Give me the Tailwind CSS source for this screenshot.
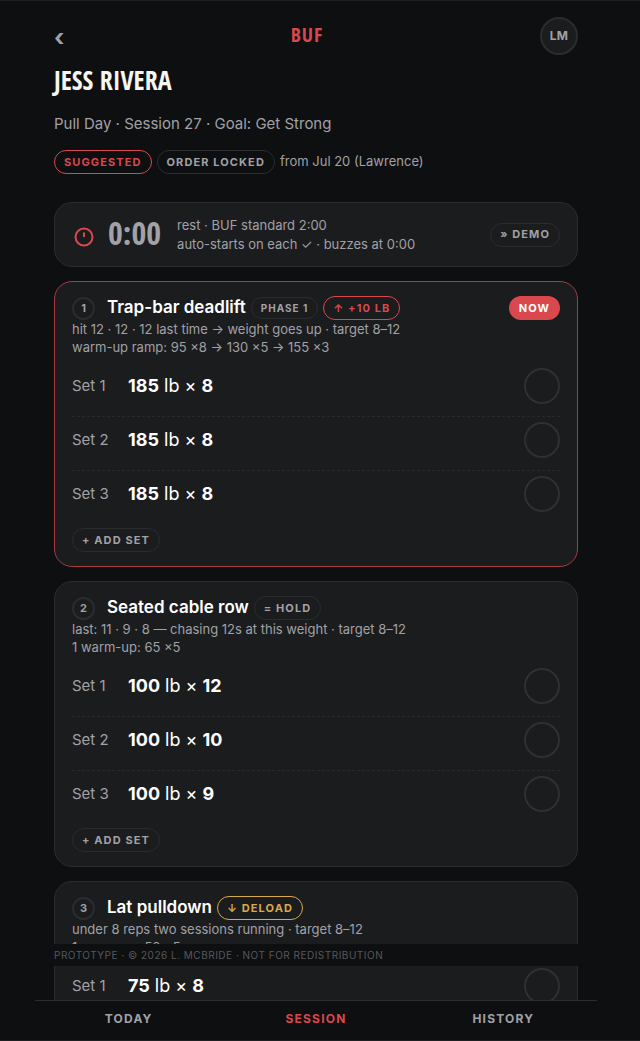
<!DOCTYPE html>
<html lang="en">
  <head>
    <meta charset="UTF-8" />
    <meta name="viewport" content="width=device-width, initial-scale=1.0" />
    <title>BUF - Session</title>
    <script src="https://cdn.jsdelivr.net/npm/@tailwindcss/browser@4"></script>
  </head>
  <body class="h-screen overflow-hidden flex flex-col border-y border-[#1e1f21] bg-[#0e0f11] pr-2 font-['Inter',sans-serif] text-[#a1a1a6]">
    <div class="relative flex-1 min-h-0 w-full max-w-[562px] mx-auto overflow-hidden">
      <main class="px-[19px] pt-4">
        <!-- Header -->
        <header class="flex items-center justify-between">
          <a href="#" aria-label="Back" class="w-5 pt-1 text-2xl font-bold">‹</a>
          <div class="pb-0.5 font-['Open_Sans_Condensed','Noto_Sans_Condensed','DejaVu_Sans_Condensed',sans-serif] text-xl font-extrabold tracking-wider text-[#d9484c]">BUF</div>
          <button type="button" class="size-[38px] rounded-full border-2 border-[#2b2c2f] bg-[#1b1c1e] text-xs font-bold tracking-wide">LM</button>
        </header>
        <h1 class="mt-[9px] font-['Open_Sans_Condensed','Noto_Sans_Condensed','DejaVu_Sans_Condensed',sans-serif] text-[26px] leading-8 font-extrabold text-[#f7f5f0]">JESS RIVERA</h1>
        <p class="mt-4 text-[15px] leading-6">Pull Day · Session 27 · Goal: Get Strong</p>
        <div class="mt-3.5 flex items-center gap-[5px] text-[13px]">
          <span class="h-6 flex items-center rounded-full border border-[#d9484c] px-[9px] text-[11px] font-bold tracking-widest text-[#d9484c]">SUGGESTED</span>
          <span class="h-6 flex items-center rounded-full border border-[#2b2c2f] px-[9px] text-[11px] font-bold tracking-widest">ORDER LOCKED</span>
          <span>from Jul 20 (Lawrence)</span>
        </div>

        <!-- Rest timer -->
        <section class="mt-7 min-h-[65px] flex items-center rounded-[18px] border border-[#2b2c2f] bg-[#1b1c1e] px-[17px] py-3">
          <svg class="mt-1 size-6" viewBox="0 0 24 24" fill="none" stroke="#d9484c" stroke-width="2"><circle cx="12" cy="12" r="8.5" /><path d="M12 7.5v4.5" /></svg>
          <div class="ml-3 pb-1 font-['Open_Sans_Condensed','Noto_Sans_Condensed','DejaVu_Sans_Condensed',sans-serif] text-[32px] leading-8 font-extrabold">0:00</div>
          <p class="ml-4 text-[13px] leading-[19px]">rest · BUF standard 2:00<br />auto-starts on each ✓ · buzzes at 0:00</p>
          <button type="button" class="ml-auto h-6 rounded-full border border-[#2b2c2f] px-[9px] text-[11px] font-bold tracking-widest">» DEMO</button>
        </section>

        <!-- Exercise 1 -->
        <section class="mt-3.5 rounded-[18px] border border-[#a83c40] bg-[#1b1c1e] px-[17px] py-3.5">
          <div class="flex items-center h-6">
            <span class="size-[23px] flex items-center justify-center rounded-full border-2 border-[#2b2c2f] text-[11px] font-bold">1</span>
            <h2 class="ml-3 text-[17px] font-semibold text-white">Trap-bar deadlift</h2>
            <span class="ml-[5px] h-[22px] flex items-center rounded-full border border-[#2b2c2f] px-[9px] text-[10px] font-bold tracking-widest">PHASE 1</span>
            <span class="ml-[5px] h-6 flex items-center rounded-full border border-[#d9484c] px-[9px] text-[11px] font-bold tracking-widest text-[#d9484c]">↑ +10 LB</span>
            <span class="ml-auto h-6 flex items-center rounded-full bg-[#d9484c] px-2.5 text-[11px] font-bold tracking-widest text-white">NOW</span>
          </div>
          <p class="text-[13px] leading-[18px]">hit 12 · 12 · 12 last time → weight goes up · target 8–12<br />warm-up ramp: 95 ×8 → 130 ×5 → 155 ×3</p>
          <ul class="mt-[7px] divide-y divide-dashed divide-[#28292b]">
            <li class="flex items-center pt-[5px] pb-3"><span class="w-14 text-[15px]">Set 1</span><span class="text-lg text-white"><b>185</b> lb × <b>8</b></span><button type="button" aria-label="Complete set 1" class="ml-auto size-9 rounded-full border-2 border-[#2f3033]"></button></li>
            <li class="flex items-center pt-[5px] pb-3"><span class="w-14 text-[15px]">Set 2</span><span class="text-lg text-white"><b>185</b> lb × <b>8</b></span><button type="button" aria-label="Complete set 2" class="ml-auto size-9 rounded-full border-2 border-[#2f3033]"></button></li>
            <li class="flex items-center pt-[5px] pb-3"><span class="w-14 text-[15px]">Set 3</span><span class="text-lg text-white"><b>185</b> lb × <b>8</b></span><button type="button" aria-label="Complete set 3" class="ml-auto size-9 rounded-full border-2 border-[#2f3033]"></button></li>
          </ul>
          <button type="button" class="mt-1 block h-6 rounded-full border border-[#2b2c2f] px-[9px] text-[11px] font-bold tracking-widest">+ ADD SET</button>
        </section>

        <!-- Exercise 2 -->
        <section class="mt-3.5 rounded-[18px] border border-[#2b2c2f] bg-[#1b1c1e] px-[17px] py-3.5">
          <div class="flex items-center h-6">
            <span class="size-[23px] flex items-center justify-center rounded-full border-2 border-[#2b2c2f] text-[11px] font-bold">2</span>
            <h2 class="ml-3 text-[17px] font-semibold text-white">Seated cable row</h2>
            <span class="ml-[5px] h-6 flex items-center rounded-full border border-[#2b2c2f] px-[9px] text-[11px] font-bold tracking-widest">= HOLD</span>
          </div>
          <p class="text-[13px] leading-[18px]">last: 11 · 9 · 8 — chasing 12s at this weight · target 8–12<br />1 warm-up: 65 ×5</p>
          <ul class="mt-[7px] divide-y divide-dashed divide-[#28292b]">
            <li class="flex items-center pt-[5px] pb-3"><span class="w-14 text-[15px]">Set 1</span><span class="text-lg text-white"><b>100</b> lb × <b>12</b></span><button type="button" aria-label="Complete set 1" class="ml-auto size-9 rounded-full border-2 border-[#2f3033]"></button></li>
            <li class="flex items-center pt-[5px] pb-3"><span class="w-14 text-[15px]">Set 2</span><span class="text-lg text-white"><b>100</b> lb × <b>10</b></span><button type="button" aria-label="Complete set 2" class="ml-auto size-9 rounded-full border-2 border-[#2f3033]"></button></li>
            <li class="flex items-center pt-[5px] pb-3"><span class="w-14 text-[15px]">Set 3</span><span class="text-lg text-white"><b>100</b> lb × <b>9</b></span><button type="button" aria-label="Complete set 3" class="ml-auto size-9 rounded-full border-2 border-[#2f3033]"></button></li>
          </ul>
          <button type="button" class="mt-1 block h-6 rounded-full border border-[#2b2c2f] px-[9px] text-[11px] font-bold tracking-widest">+ ADD SET</button>
        </section>

        <!-- Exercise 3 -->
        <section class="mt-3.5 rounded-[18px] border border-[#2b2c2f] bg-[#1b1c1e] px-[17px] py-3.5">
          <div class="flex items-center h-6">
            <span class="size-[23px] flex items-center justify-center rounded-full border-2 border-[#2b2c2f] text-[11px] font-bold">3</span>
            <h2 class="ml-3 text-[17px] font-semibold text-white">Lat pulldown</h2>
            <span class="ml-[5px] h-6 flex items-center rounded-full border border-[#d9a94a] px-[9px] text-[11px] font-bold tracking-widest text-[#d9a94a]">↓ DELOAD</span>
          </div>
          <p class="text-[13px] leading-[18px]">under 8 reps two sessions running · target 8–12<br />1 warm-up: 50 ×5</p>
          <ul class="mt-[7px]">
            <li class="flex items-center pt-[5px] pb-3"><span class="w-14 text-[15px]">Set 1</span><span class="text-lg text-white"><b>75</b> lb × <b>8</b></span><button type="button" aria-label="Complete set 1" class="ml-auto size-9 rounded-full border-2 border-[#2f3033]"></button></li>
          </ul>
        </section>
      </main>
      <footer class="absolute inset-x-0 bottom-[34px] h-[22px] flex items-center bg-[#0e0f11] px-[19px] text-[10px] tracking-wider text-[#57585c]">PROTOTYPE · © 2026 L. MCBRIDE · NOT FOR REDISTRIBUTION</footer>
    </div>
    <nav class="w-full max-w-[562px] mx-auto h-10 grid grid-cols-3 border-t border-[#2b2c2f] pb-1 text-xs font-bold tracking-widest">
      <a href="#" class="flex items-center justify-center">TODAY</a>
      <a href="#" aria-current="page" class="flex items-center justify-center text-[#d9484c]">SESSION</a>
      <a href="#" class="flex items-center justify-center">HISTORY</a>
    </nav>
  </body>
</html>
